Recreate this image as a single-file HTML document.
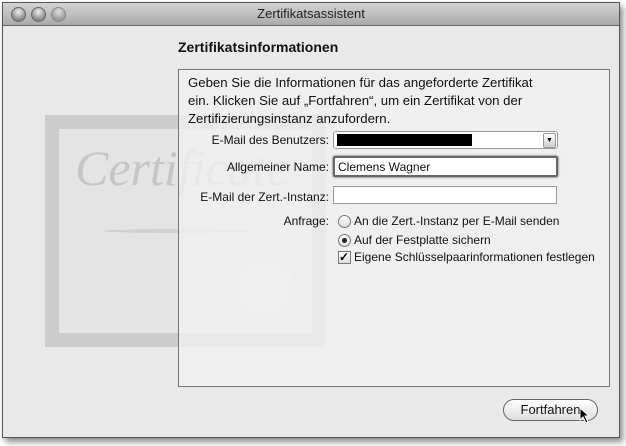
<html><head><style>
body{margin:0;width:626px;height:446px;background:#fff;font-family:"Liberation Sans",sans-serif;position:relative;overflow:hidden}
.win{position:absolute;left:2px;top:2px;width:616px;height:434px;border:1px solid #555;background:#e9e9e9;box-shadow:3px 4px 6px rgba(0,0,0,.45)}
.tb{position:absolute;left:0;top:0;width:616px;height:22px;background:linear-gradient(#d4d4d4,#a9a9a9);border-bottom:1px solid #666;text-align:center;font-size:13px;line-height:22px;color:#222}
.dot{position:absolute;top:4px;width:13px;height:13px;border-radius:50%;background:radial-gradient(circle at 50% 30%,#eee,#888 70%);border:1px solid #666}
.a{position:absolute}
.lbl{position:absolute;font-size:12px;text-align:right;color:#111;width:160px}
.fld{position:absolute;background:#fff;border:1px solid #999;height:16px}
.t{font-size:12px;color:#111;position:absolute;white-space:nowrap}
.rad{position:absolute;width:11px;height:11px;border-radius:50%;border:1px solid #777;background:linear-gradient(#fff,#ddd)}
</style></head><body>
<div class="win">
<div class="tb">Zertifikatsassistent
<div class="dot" style="left:8px"></div><div class="dot" style="left:28px"></div><div class="dot" style="left:48px;opacity:.6"></div></div>
<div class="a" style="left:42px;top:112px;width:281px;height:232px;background:#cdcdcd"></div>
<div class="a" style="left:56px;top:126px;width:253px;height:204px;background:#e4e4e4"></div>
<div class="a" style="left:72px;top:136px;font-family:'Liberation Serif',serif;font-style:italic;font-size:50px;color:#c6c6c6">Certificate</div>
<div class="a" style="left:100px;top:226px;width:150px;height:4px;border-radius:50%;background:#d0d0d0"></div>
<svg class="a" style="left:218px;top:242px" width="84" height="84"><polygon points="42,2 49,17 62,7 62,23 78,21 71,35 82,42 71,49 78,63 62,61 62,77 49,67 42,82 35,67 22,77 22,61 6,63 13,49 2,42 13,35 6,21 22,23 22,7 35,17" fill="#ececec" stroke="#dadada"/></svg>
<div class="a" style="left:175px;top:36px;font-size:14px;font-weight:bold;color:#111">Zertifikatsinformationen</div>
<div class="a" style="left:175px;top:66px;width:430px;height:316px;border:1px solid #777;background:rgba(240,240,240,.8)"></div>
<div class="a" style="left:185px;top:71px;font-size:13.2px;line-height:18px;color:#111">Geben Sie die Informationen für das angeforderte Zertifikat<br>ein. Klicken Sie auf „Fortfahren“, um ein Zertifikat von der<br>Zertifizierungsinstanz anzufordern.</div>
<div class="lbl" style="left:166px;top:130px">E-Mail des Benutzers:</div>
<div class="fld" style="left:330px;top:128px;width:223px;border-radius:3px"><div class="a" style="left:3px;top:2px;width:135px;height:12px;background:#000"></div><div class="a" style="right:1px;top:1px;width:11px;height:13px;background:linear-gradient(#fff,#ccc);border:1px solid #999;border-radius:2px;font-size:7px;text-align:center;line-height:13px">▼</div></div>
<div class="lbl" style="left:166px;top:157px">Allgemeiner Name:</div>
<div class="fld" style="left:330px;top:153px;width:221px;height:17px;border:2px solid #666;border-radius:2px;box-shadow:0 0 2px #444"><span class="t" style="left:3px;top:2px">Clemens Wagner</span></div>
<div class="lbl" style="left:166px;top:187px">E-Mail der Zert.-Instanz:</div>
<div class="fld" style="left:330px;top:183px;width:222px"></div>
<div class="lbl" style="left:166px;top:211px">Anfrage:</div>
<div class="rad" style="left:335px;top:212px"></div><span class="t" style="left:351px;top:211px">An die Zert.-Instanz per E-Mail senden</span>
<div class="rad" style="left:335px;top:231px"><div class="a" style="left:3px;top:3px;width:5px;height:5px;border-radius:50%;background:#222"></div></div><span class="t" style="left:351px;top:230px">Auf der Festplatte sichern</span>
<div class="a" style="left:335px;top:248px;width:11px;height:11px;border:1px solid #777;background:linear-gradient(#fff,#ddd);font-size:12px;line-height:11px;font-weight:bold">✓</div><span class="t" style="left:351px;top:247px">Eigene Schlüsselpaarinformationen festlegen</span>
<div class="a" style="left:500px;top:396px;width:93px;height:20px;border:1px solid #666;border-radius:11px;background:linear-gradient(#fff,#ddd);font-size:13px;text-align:center;line-height:20px;color:#111">Fortfahren</div>
<svg class="a" style="left:576px;top:404px" width="14" height="18"><path d="M1 1 L1 13 L4 10 L7 16 L9 15 L6 9 L10 9 Z" fill="#000" stroke="#fff" stroke-width="1"/></svg>
</div>
</body></html>
